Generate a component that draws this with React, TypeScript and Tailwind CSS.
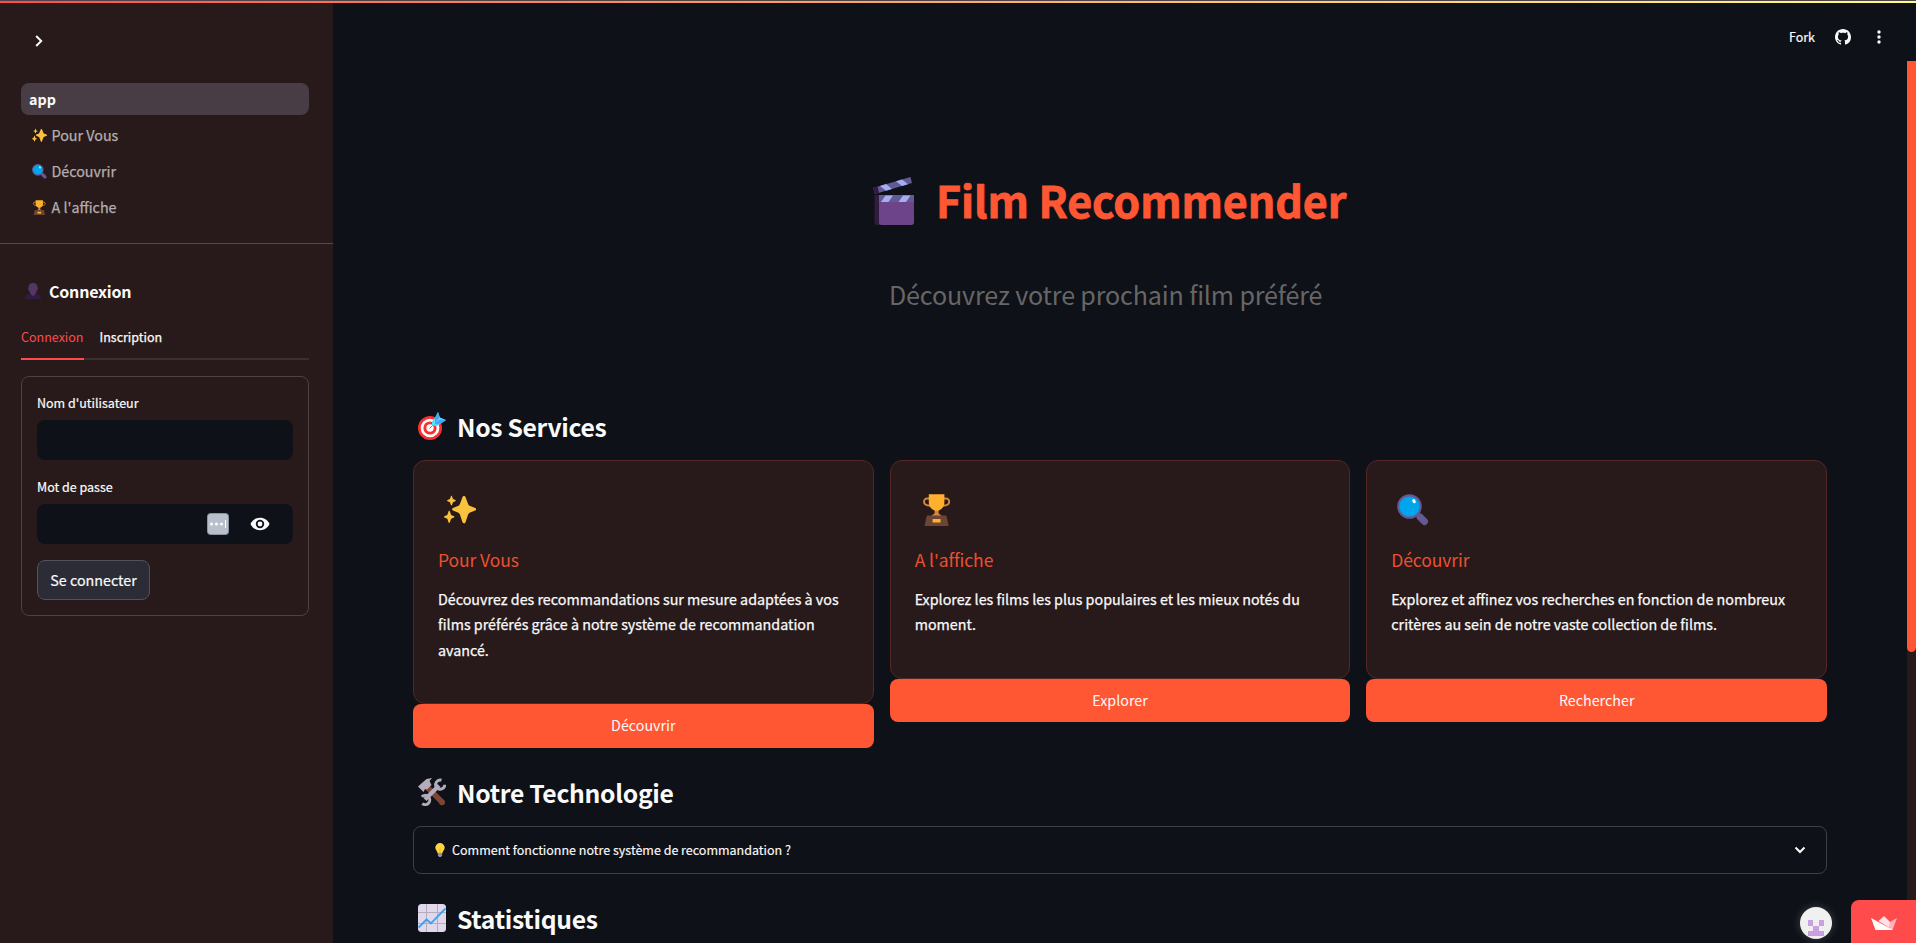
import type { ReactNode } from "react";

function Sparkles({ className }: { className: string }) {
  return (
    <svg viewBox="0 0 32 32" className={className} fill="#f9c23c">
      <path d="M18.500 3.100c.5-1.600 2.500-1.600 3 0l2.500 6.600c.4 1.100 1.200 1.900 2.200 2.300l5 2c1.200.5 1.200 2 0 2.500l-5 2c-1 .4-1.800 1.200-2.200 2.300l-2.500 7.400c-.5 1.600-2.500 1.600-3 0l-2.500-7.400c-.4-1.100-1.200-1.900-2.200-2.300l-4.800-2c-1.200-.5-1.200-2 0-2.500l4.800-2c1-.4 1.800-1.200 2.200-2.300z" />
      <path d="M4.600 17.200c.2-.6 1-.6 1.200 0l1.300 3.700 2.900 1.300c.6.3.6 1 0 1.300l-2.900 1.300-1.300 3.700c-.2.6-1 .6-1.200 0l-1.300-3.700-2.900-1.300c-.6-.3-.6-1 0-1.300l2.900-1.300z" />
      <path d="M6.900 2.300c.2-.6.900-.6 1.100 0l1 2.800 2.400 1c.5.200.5.900 0 1.100l-2.400 1-1 2.800c-.2.6-.9.600-1.100 0l-1-2.800-2.400-1c-.5-.2-.5-.9 0-1.100l2.400-1z" />
    </svg>
  );
}

function Magnifier({ className }: { className: string }) {
  return (
    <svg viewBox="0 0 32 32" className={className}>
      <path d="M23 23l4.500 4.500" stroke="#635994" strokeWidth="7" strokeLinecap="round" />
      <path d="M18 18l4 4" stroke="#635994" strokeWidth="3" />
      <circle cx="12.500" cy="12.500" r="11.200" fill="#00a6ed" stroke="#635994" strokeWidth="2.200" />
      <ellipse cx="17" cy="7.200" rx="1.600" ry="2.200" fill="#fff" transform="rotate(-30 17 7.200)" />
    </svg>
  );
}

function Trophy({ className }: { className: string }) {
  return (
    <svg viewBox="0 0 32 32" className={className}>
      <path d="M8.500 4.500H6.200a3.200 3.200 0 0 0-3.200 3.200c0 2.500 2.500 3.800 6.500 4M22.700 4.500H25a3.200 3.200 0 0 1 3.200 3.200c0 2.500-2.500 3.800-6.500 4" fill="none" stroke="#d3883e" strokeWidth="1.900" />
      <path d="M13.600 15h4v4c0 1.200 3.200 1.800 3.200 3.500H10.400c0-1.700 3.200-2.300 3.200-3.500z" fill="#d3883e" />
      <path d="M7.800.3h15.600v8.200c0 4.500-3.400 8.200-7.800 8.200s-7.800-3.700-7.800-8.200z" fill="#ffb02e" />
      <path d="M7 21.500h17.200c.8 0 1.300.4 1.500 1.200L27.600 32H3.600l1.900-9.300c.2-.8.700-1.200 1.500-1.200z" fill="#6d4534" />
      <rect x="11.600" y="25" width="8" height="3.600" rx=".4" fill="#ffb02e" />
    </svg>
  );
}

function Bust({ className }: { className: string }) {
  return (
    <svg viewBox="0 0 32 32" className={className}>
      <path d="M0 32c.3-6 3-8.500 7-9.300l4-1.700h10l4 1.700c4 .8 6.700 3.300 7 9.300z" fill="#321b41" />
      <path d="M16 0c6 0 9 3.500 9 9 1.500 1 1.200 4.500-.7 5-.6 3-1.800 5-3.300 6.500V22l-5 4.500L11 22v-1.500C9.500 19 8.300 17 7.700 14c-1.900-.5-2.200-4-.7-5C7 3.500 10 0 16 0z" fill="#533566" />
    </svg>
  );
}

function Clapper({ className }: { className: string }) {
  return (
    <svg viewBox="0 0 41 48" className={className}>
      <path d="M0 11L37.500 0l1.500 6L2 17z" fill="#635994" />
      <path d="M0 11l4.500-1.400L6 15.800 2 17z" fill="#321b41" />
      <path d="M7 9l6-1.900 6 4.800-6 1.800zM23 4.300l6-1.900 6 4.800-6 1.800z" fill="#a6aef0" />
      <path d="M1.500 18h6v30H4c-1.500 0-2.500-1-2.500-2.500z" fill="#321b41" />
      <path d="M6 24h35v21.500c0 1.500-1 2.500-2.500 2.500h-30C7 48 6 47 6 45.500z" fill="#6d4489" />
      <path d="M6 18h35v7H6z" fill="#635994" />
      <path d="M12.500 18.500H20L15.500 25H8zM30 18.500h7.500L33 25h-7.500z" fill="#a6aef0" />
    </svg>
  );
}

function Dart({ className }: { className: string }) {
  return (
    <svg viewBox="0 0 28 28" className={className}>
      <circle cx="12" cy="16" r="12" fill="#f8312f" />
      <circle cx="12" cy="16" r="9.300" fill="#fff" />
      <circle cx="12" cy="16" r="6.600" fill="#f8312f" />
      <circle cx="12" cy="16" r="3.700" fill="#fff" />
      <path d="M11.500 16.500l7-7" stroke="#8d65c5" strokeWidth="1" />
      <path d="M14 13.500V9.500L17.500 5 20 0l2 5.500 6 2.500-4.500 3-4.500 3z" fill="#50e2ff" />
      <path d="M17 5.500L20 0l1.500 5.500L17 11zM17 11l5-3.500 6 .500-5 3.500-5.500 1z" fill="#46a4fb" />
    </svg>
  );
}

function Tools({ className }: { className: string }) {
  return (
    <svg viewBox="0 0 28 28" className={className}>
      <path d="M9 9l14.500 14.500" stroke="#7d4533" strokeWidth="5.500" />
      <circle cx="24" cy="24.200" r="3" fill="#7d4533" />
      <path d="M0 8.500L8.500 1 14 0 11.500 3 13.500 7 9 11.500 7 11 5.500 14z" fill="#b4acbc" />
      <path d="M7 21.500L21 7.500" stroke="#b4acbc" strokeWidth="4.200" />
      <path d="M23.500 2.200a4.600 4.600 0 1 0 3.300 4.600M4.300 25.600a4.600 4.600 0 1 0-.5-6.800" fill="none" stroke="#b4acbc" strokeWidth="3" />
    </svg>
  );
}

function ChartIcon({ className }: { className: string }) {
  return (
    <svg viewBox="0 0 28 28" className={className}>
      <rect width="28" height="28" rx="3.500" fill="#e1d8ec" />
      <path d="M8.500 0v28M19.500 0v28M0 8.500h28M0 19.500h28" stroke="#b4acbc" strokeWidth="1" />
      <path d="M.5 23.500l8-8 4.500 3.800L27.500 4.500" fill="none" stroke="#3f9fe8" strokeWidth="1.800" />
    </svg>
  );
}

function Bulb({ className }: { className: string }) {
  return (
    <svg viewBox="0 0 10 14" className={className}>
      <path d="M5 0a4.700 4.700 0 0 1 4.700 4.700C9.700 7 7.500 8 7.300 10.500H2.700C2.500 8 .3 7 .3 4.700A4.700 4.700 0 0 1 5 0z" fill="#fcd53f" />
      <path d="M4.200 5.500h1.600v5H4.200z" fill="#f9a93c" opacity=".6" />
      <path d="M2.900 10.300h4.200v2.200L6 14H4l-1.100-1.500z" fill="#998ea4" />
    </svg>
  );
}

const navLinks = [
  { label: "Pour Vous", icon: <Sparkles className="size-[15px]" /> },
  { label: "Découvrir", icon: <Magnifier className="size-[15px]" /> },
  { label: "A l'affiche", icon: <Trophy className="size-[15px]" /> },
];

const services = [
  {
    title: "Pour Vous",
    icon: <Sparkles className="size-8" />,
    lines: ["Découvrez des recommandations sur mesure adaptées à vos", "films préférés grâce à notre système de recommandation", "avancé."],
    action: "Découvrir",
  },
  {
    title: "A l'affiche",
    icon: <Trophy className="size-8" />,
    lines: ["Explorez les films les plus populaires et les mieux notés du", "moment."],
    action: "Explorer",
  },
  {
    title: "Découvrir",
    icon: <Magnifier className="size-8" />,
    lines: ["Explorez et affinez vos recherches en fonction de nombreux", "critères au sein de notre vaste collection de films."],
    action: "Rechercher",
  },
];

function SectionTitle({ icon, children }: { icon: ReactNode; children: ReactNode }) {
  return (
    <h2 className="flex h-[34px] items-center gap-[11px] pl-[5px] text-[24.700px] leading-[34px] font-semibold tracking-[-0.300px] whitespace-nowrap text-[#fafafa]">
      {icon}
      <span>{children}</span>
    </h2>
  );
}

function Sidebar() {
  return (
    <aside className="flex h-full w-[333px] shrink-0 flex-col bg-[#281a1a] pt-[35px]">
      <svg viewBox="0 0 8 12" className="ml-[35px] h-3 w-2" fill="none" stroke="#fafafa" strokeWidth="2">
        <path d="M1.200 1l5 5-5 5" />
      </svg>
      <nav className="mt-[36px] flex flex-col gap-1 pr-6 pl-[21px] text-[14.300px] leading-8 text-[#b4aeae]">
        <a className="h-8 rounded-lg bg-[#483d44] px-2 font-bold text-[#fafafa]">app</a>
        {navLinks.map((link) => (
          <a key={link.label} className="flex h-8 items-center gap-[4.500px] pl-[11px] [-webkit-text-stroke:0.250px]">
            {link.icon}
            <span>{link.label}</span>
          </a>
        ))}
      </nav>
      <div className="mt-[20px] h-px bg-[#574a4a]" />
      <h3 className="mt-[33px] flex h-7 items-center gap-2 pl-[25px] text-[16px] leading-7 font-semibold tracking-[-0.200px] text-[#fafafa]">
        <Bust className="size-4" />
        <span>Connexion</span>
      </h3>
      <div className="mr-6 ml-[21px]">
        <div className="mt-[13px] flex h-[42px] gap-4 border-b-2 border-[#3b2e2f] text-[12.500px] leading-[38px] text-[#fafafa]">
          <span className="h-[42px] border-b-2 border-[#ff4b4b] text-[#ff4b4b]">Connexion</span>
          <span className="[-webkit-text-stroke:0.250px]">Inscription</span>
        </div>
        <form className="mt-4 h-[240px] rounded-lg border border-[#4d4142] px-[15px] pt-[15px] text-[12.500px] leading-[22px] text-[#fafafa] [-webkit-text-stroke:0.200px]">
          <label className="block h-7">Nom d'utilisateur</label>
          <div className="h-10 rounded-lg bg-[#0e1117]" />
          <label className="mt-4 block h-7">Mot de passe</label>
          <div className="flex h-10 items-center justify-end gap-[21px] rounded-lg bg-[#0e1117] pr-[23px]">
            <svg viewBox="0 0 22 22" className="size-[22px]">
              <rect x=".5" y=".5" width="21" height="21" rx="3" fill="#b8c0cc" stroke="#8b93a0" />
              <circle cx="4.500" cy="11" r="1.500" fill="#fff" />
              <circle cx="9.500" cy="11" r="1.500" fill="#fff" />
              <circle cx="14.500" cy="11" r="1.500" fill="#fff" />
              <path d="M18.500 7v8" stroke="#fff" />
            </svg>
            <svg viewBox="0 0 20 14" className="h-[14px] w-5">
              <path d="M10 .8c4.300 0 7.900 2.500 9.500 6.200-1.600 3.700-5.200 6.200-9.500 6.200S2.100 10.700.5 7C2.100 3.300 5.700.8 10 .8z" fill="#fafafa" />
              <circle cx="10" cy="7" r="4.200" fill="#0e1117" />
              <circle cx="10" cy="7" r="2.400" fill="#fafafa" />
            </svg>
          </div>
          <button type="button" className="mt-4 block h-10 w-[113px] rounded-lg border border-[#51525d] bg-[#2b2c36] pb-px text-[14.300px] leading-[37px]">
            Se connecter
          </button>
        </form>
      </div>
    </aside>
  );
}

export default function App() {
  return (
    <div className="relative flex h-[943px] w-[1916px] overflow-hidden bg-[#0e1117] font-['Noto_Sans_CJK_SC',sans-serif] text-[#fafafa]">
      <div className="absolute inset-x-0 top-0 h-[3px] border-t border-[#4c4448] bg-linear-to-r from-[#ff4b4b] to-[#fffd80]" />
      <Sidebar />
      <main className="flex min-w-0 flex-1 flex-col">
        <header className="flex h-[61px] shrink-0 items-center justify-end pt-[13px] pr-[35px] text-[12.500px]">
          <span className="mr-5 leading-6 [-webkit-text-stroke:0.200px]">Fork</span>
          <svg viewBox="0 0 16 16" className="mr-[26px] size-4" fill="#fafafa">
            <path d="M8 0C3.580 0 0 3.580 0 8c0 3.540 2.290 6.530 5.470 7.590.4.070.55-.17.55-.38 0-.19-.01-.82-.01-1.490-2.010.37-2.530-.49-2.690-.94-.09-.23-.48-.94-.82-1.130-.28-.15-.68-.52-.01-.53.63-.01 1.080.58 1.230.82.72 1.210 1.870.87 2.330.66.07-.52.28-.87.51-1.070-1.780-.2-3.640-.89-3.640-3.950 0-.87.31-1.590.82-2.150-.08-.2-.36-1.020.08-2.120 0 0 .67-.21 2.200.82.64-.18 1.320-.27 2-.27s1.360.09 2 .27c1.530-1.040 2.200-.82 2.200-.82.44 1.100.16 1.920.08 2.120.51.56.82 1.270.82 2.150 0 3.070-1.870 3.750-3.650 3.950.29.25.54.73.54 1.480 0 1.070-.01 1.930-.01 2.200 0 .21.15.46.55.38A8.010 8.010 0 0 0 16 8c0-4.420-3.580-8-8-8z" />
          </svg>
          <svg viewBox="0 0 4 14" className="h-[14px] w-1" fill="#fafafa">
            <circle cx="2" cy="2" r="1.700" />
            <circle cx="2" cy="7" r="1.700" />
            <circle cx="2" cy="12" r="1.700" />
          </svg>
        </header>
        <div className="flex min-h-0 flex-1">
          <div className="min-w-0 flex-1 overflow-hidden pr-20 pl-20">
            <h1 className="mt-[108px] flex h-[64px] items-center gap-[22px] pl-[460px] text-[43px] leading-[61px] font-bold tracking-[-0.100px] whitespace-nowrap text-[#ff5733] [-webkit-text-stroke:0.800px]">
              <Clapper className="h-12 w-[41px]" />
              <span className="pb-[3px]">Film Recommender</span>
            </h1>
            <p className="mt-[40px] pl-[476px] text-[25.100px] leading-[42px] font-normal tracking-[-0.160px] whitespace-nowrap text-[#666]">
              Découvrez votre prochain film préféré
            </p>
            <div className="mt-[94px]">
              <SectionTitle icon={<Dart className="size-7" />}>Nos Services</SectionTitle>
            </div>
            <div className="mt-[17px] grid grid-cols-3 items-start gap-4">
              {services.map((s) => (
                <section key={s.title}>
                  <div className="rounded-xl border border-[#552824] bg-[#281a1a] px-6 pt-[33px] pb-[40.800px]">
                    <div className="ml-[6px]">{s.icon}</div>
                    <h3 className="mt-[18px] text-[17.500px] leading-8 font-normal tracking-[-0.100px] text-[#ff5733] opacity-90">{s.title}</h3>
                    <p className="mt-[9.600px] text-[14.300px] leading-[25.600px] whitespace-nowrap [-webkit-text-stroke:0.250px]">
                      {s.lines.map((line) => (
                        <span key={line} className="block">
                          {line}
                        </span>
                      ))}
                    </p>
                  </div>
                  <button type="button" className="block h-[43.600px] w-full rounded-lg bg-[#ff5733] pb-[1.600px] text-[14.300px] leading-[42px] text-[#fafafa]">
                    {s.action}
                  </button>
                </section>
              ))}
            </div>
            <div className="mt-[27px]">
              <SectionTitle icon={<Tools className="size-7" />}>Notre Technologie</SectionTitle>
            </div>
            <div className="mt-[17px] flex h-12 items-center rounded-lg border border-[#3d4044] pr-5 pl-[21px] text-[12.500px]">
              <Bulb className="mr-[7px] h-[14px] w-[10px]" />
              <span className="leading-6 whitespace-nowrap [-webkit-text-stroke:0.150px]">Comment fonctionne notre système de recommandation ?</span>
              <svg viewBox="0 0 12 8" className="ml-auto h-2 w-3" fill="none" stroke="#fafafa" strokeWidth="2">
                <path d="M1.500 1.500L6 6l4.500-4.500" />
              </svg>
            </div>
            <div className="mt-[27px]">
              <SectionTitle icon={<ChartIcon className="size-7" />}>Statistiques</SectionTitle>
            </div>
          </div>
          <div className="w-[9px] shrink-0 bg-[#281a1a]">
            <div className="h-[591px] rounded-b-[5px] bg-[#ff5733]" />
          </div>
        </div>
      </main>
      <div className="absolute right-[84px] bottom-1 size-8 rounded-full bg-[#f0f0f0] shadow-[0_0_10px_rgba(255,255,255,0.200)]">
        <svg viewBox="0 0 32 32" className="size-8" fill="#c9a0e0">
          <path d="M8 13h5v6H8zM19 13h5v6h-5zM13 19h6v5h5v5H8v-5h5z" />
        </svg>
      </div>
      <div className="absolute right-0 bottom-0 flex h-[43px] w-[65px] justify-center rounded-tl-lg bg-[#ff4b4b] pt-4">
        <svg viewBox="0 0 26 14" className="h-[14px] w-[26px]">
          <path d="M7.500 5L13 0l5.500 5.500L21 13.500z" fill="#ffe0e6" />
          <path d="M26 2l-4.500 12H17l2-8z" fill="#ffb3bb" />
          <path d="M0 2l22 12H4.500z" fill="#fff" />
        </svg>
      </div>
    </div>
  );
}
